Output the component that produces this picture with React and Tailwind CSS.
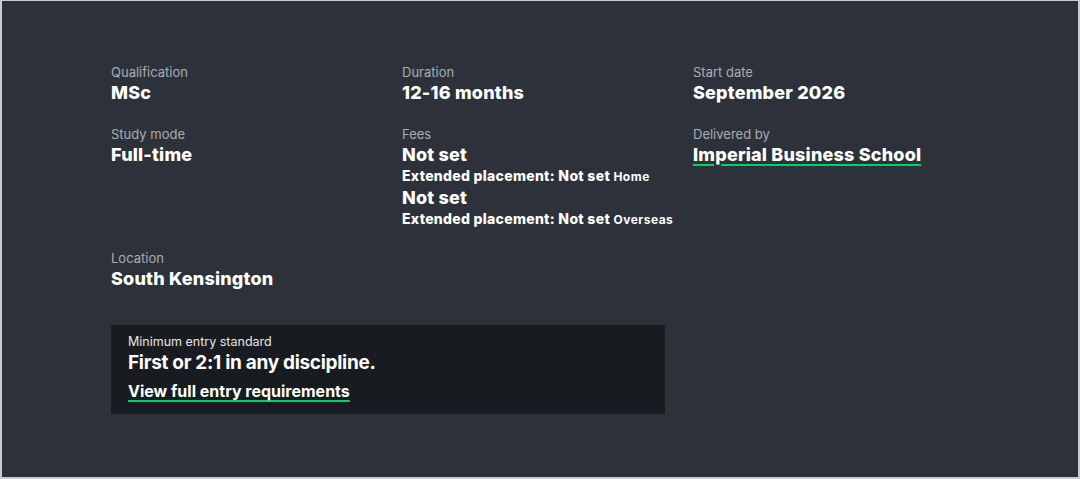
import React from 'react';

const font = { fontFamily: 'Inter, "Noto Sans", sans-serif' };

function Item({ label, children }) {
  return (
    <div>
      <div className="text-[13px] leading-[17px] text-[#a9adb3]">{label}</div>
      {children}
    </div>
  );
}

function Value({ children }) {
  return <div className="text-[18px] leading-[24px] font-extrabold text-white tracking-[0.2px]">{children}</div>;
}

function GreenLink({ children, className = '' }) {
  return (
    <a href="#" className={`text-white underline decoration-[#00d26a] decoration-2 underline-offset-[3px] ${className}`}>
      {children}
    </a>
  );
}

function Placement({ region }) {
  return (
    <div className="text-[14px] leading-[18px] font-extrabold text-white tracking-[0.3px]">
      Extended placement: Not set <span className="text-[12px] font-bold tracking-[0.5px]">{region}</span>
    </div>
  );
}

export default function App() {
  return (
    <div style={font} className="w-[1080px] h-[479px] bg-[#2d323a] border-l-2 border-t border-r-2 border-b-2 border-[#c9ccd0] box-border">
      <div className="pl-[109px] pt-[63px]">
        <div className="grid grid-cols-[291px_291px_291px] gap-y-[21px]">
          <Item label="Qualification"><Value>MSc</Value></Item>
          <Item label="Duration"><Value>12-16 months</Value></Item>
          <Item label="Start date"><Value>September 2026</Value></Item>

          <Item label="Study mode"><Value>Full-time</Value></Item>
          <Item label="Fees">
            <Value>Not set</Value>
            <Placement region="Home" />
            <Value>Not set</Value>
            <Placement region="Overseas" />
          </Item>
          <Item label="Delivered by">
            <div className="text-[18px] leading-[24px] font-extrabold tracking-[0.2px]">
              <GreenLink>Imperial Business School</GreenLink>
            </div>
          </Item>

          <Item label="Location"><Value>South Kensington</Value></Item>
        </div>

        <div className="mt-[34px] w-[554px] bg-[#181b1f] pl-[17px] pt-[9px] pb-[12px]">
          <div className="text-[12.5px] leading-[16px] text-[#e6e7e9]">Minimum entry standard</div>
          <div className="text-[19px] leading-[26px] font-bold text-white tracking-[-0.3px]">First or 2:1 in any discipline.</div>
          <div className="mt-[4px] text-[16px] leading-[22px] font-bold">
            <GreenLink>View full entry requirements</GreenLink>
          </div>
        </div>
      </div>
    </div>
  );
}
